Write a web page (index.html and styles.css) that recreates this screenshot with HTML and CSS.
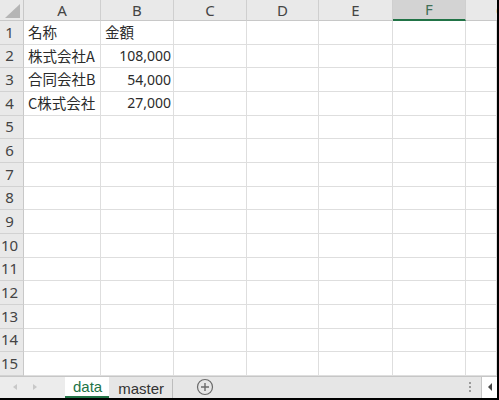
FILE: index.html
```html
<!DOCTYPE html>
<html lang="ja">
<head>
<meta charset="utf-8">
<link rel="stylesheet" href="styles.css">
</head>
<body>
<div class="frame">
  <div class="sheet">
    <div class="corner"><svg width="24" height="21" viewBox="0 0 24 21"><polygon points="20,4 20,18 5,18" fill="#b5b5b5"/></svg></div>
    <div class="ch">A</div><div class="ch">B</div><div class="ch">C</div><div class="ch">D</div><div class="ch">E</div><div class="ch sel">F</div><div class="ch last">G</div>

    <div class="rh">1</div><div class="c">名称</div><div class="c">金額</div><div class="c"></div><div class="c"></div><div class="c"></div><div class="c"></div><div class="c"></div>
    <div class="rh">2</div><div class="c">株式会社A</div><div class="c num">108,000</div><div class="c"></div><div class="c"></div><div class="c"></div><div class="c"></div><div class="c"></div>
    <div class="rh">3</div><div class="c">合同会社B</div><div class="c num">54,000</div><div class="c"></div><div class="c"></div><div class="c"></div><div class="c"></div><div class="c"></div>
    <div class="rh">4</div><div class="c">C株式会社</div><div class="c num">27,000</div><div class="c"></div><div class="c"></div><div class="c"></div><div class="c"></div><div class="c"></div>
    <div class="rh">5</div><div class="c"></div><div class="c"></div><div class="c"></div><div class="c"></div><div class="c"></div><div class="c"></div><div class="c"></div>
    <div class="rh">6</div><div class="c"></div><div class="c"></div><div class="c"></div><div class="c"></div><div class="c"></div><div class="c"></div><div class="c"></div>
    <div class="rh">7</div><div class="c"></div><div class="c"></div><div class="c"></div><div class="c"></div><div class="c"></div><div class="c"></div><div class="c"></div>
    <div class="rh">8</div><div class="c"></div><div class="c"></div><div class="c"></div><div class="c"></div><div class="c"></div><div class="c"></div><div class="c"></div>
    <div class="rh">9</div><div class="c"></div><div class="c"></div><div class="c"></div><div class="c"></div><div class="c"></div><div class="c"></div><div class="c"></div>
    <div class="rh">10</div><div class="c"></div><div class="c"></div><div class="c"></div><div class="c"></div><div class="c"></div><div class="c"></div><div class="c"></div>
    <div class="rh">11</div><div class="c"></div><div class="c"></div><div class="c"></div><div class="c"></div><div class="c"></div><div class="c"></div><div class="c"></div>
    <div class="rh">12</div><div class="c"></div><div class="c"></div><div class="c"></div><div class="c"></div><div class="c"></div><div class="c"></div><div class="c"></div>
    <div class="rh">13</div><div class="c"></div><div class="c"></div><div class="c"></div><div class="c"></div><div class="c"></div><div class="c"></div><div class="c"></div>
    <div class="rh">14</div><div class="c"></div><div class="c"></div><div class="c"></div><div class="c"></div><div class="c"></div><div class="c"></div><div class="c"></div>
    <div class="rh">15</div><div class="c"></div><div class="c"></div><div class="c"></div><div class="c"></div><div class="c"></div><div class="c"></div><div class="c"></div>
  </div>
  <div class="bar">
    <div class="nav">
      <svg width="8" height="8" viewBox="0 0 8 8"><polygon points="6,1 6,7 2,4" fill="#c8c8c8"/></svg>
      <svg width="8" height="8" viewBox="0 0 8 8"><polygon points="2,1 2,7 6,4" fill="#c8c8c8"/></svg>
    </div>
    <div class="tab active">data</div>
    <div class="tab">master</div>
    <div class="add"><svg width="18" height="18" viewBox="0 0 18 18"><circle cx="9" cy="9" r="7.5" fill="none" stroke="#6a6a6a" stroke-width="1.2"/><path d="M9 5v8M5 9h8" stroke="#6a6a6a" stroke-width="1.4"/></svg></div>
    <div class="spacer"></div>
    <div class="dots"><span></span><span></span><span></span></div>
    <div class="scroll"><svg width="8" height="10" viewBox="0 0 8 10"><polygon points="6,1 6,9 2,5" fill="#444"/></svg></div>
  </div>
</div>
</body>
</html>
```
FILE: styles.css
```css
html, body {
  margin: 0;
  padding: 0;
  background: #000;
}
body {
  width: 499px;
  height: 400px;
  overflow: hidden;
}
.frame {
  width: 497px;
  height: 398px;
  background: #fff;
  display: flex;
  flex-direction: column;
  overflow: hidden;
}
.sheet {
  display: grid;
  grid-template-columns: 24px 77px 73px 73px 72px 74px 73px 1fr;
  grid-template-rows: 21px repeat(15, 23.67px);
  font-family: "Noto Sans CJK JP", "Noto Sans", sans-serif;
  font-size: 14.5px;
  color: #2b2b2b;
}
.corner {
  background: #e9e9e9;
  border-right: 1px solid #c8c8c8;
  border-bottom: 1px solid #c8c8c8;
  box-sizing: border-box;
}
.corner svg { display: block; }
.ch {
  background: #e9e9e9;
  border-right: 1px solid #cfcfcf;
  border-bottom: 1px solid #c8c8c8;
  box-sizing: border-box;
  display: flex;
  align-items: center;
  justify-content: center;
  font-family: "Noto Sans", sans-serif;
  font-size: 15px;
  color: #444;
  line-height: 1;
}
.ch.sel {
  background: #d3d3d3;
  border-bottom: 2px solid #217346;
  color: #3f6f57;
}
.ch.last {
  justify-content: flex-start;
  padding-left: 30px;
  overflow: hidden;
  border-right: none;
}
.rh {
  background: #e9e9e9;
  border-right: 1px solid #c8c8c8;
  border-bottom: 1px solid #d2d2d2;
  box-sizing: border-box;
  display: flex;
  align-items: center;
  justify-content: center;
  padding-right: 4px;
  font-family: "Noto Sans", sans-serif;
  font-size: 15px;
  color: #444;
  line-height: 1;
}
.c {
  border-right: 1px solid #dedede;
  border-bottom: 1px solid #dedede;
  box-sizing: border-box;
  display: flex;
  align-items: center;
  padding: 0 2px 0 4px;
  white-space: nowrap;
  line-height: 1;
}
.c.num {
  justify-content: flex-end;
  font-family: "Noto Sans", sans-serif;
  font-size: 14px;
}
.bar {
  height: 22px;
  background: #e6e6e6;
  border-top: 1px solid #c6c6c6;
  box-sizing: border-box;
  display: flex;
  align-items: stretch;
  font-family: "Liberation Sans", Arial, sans-serif;
  font-size: 15px;
}
.nav {
  width: 65px;
  background: #ececec;
  display: flex;
  align-items: center;
  gap: 12px;
  padding-left: 11px;
  box-sizing: border-box;
}
.tab {
  display: flex;
  align-items: center;
  padding: 0 8px 0 9px;
  color: #333;
  border-right: 1px solid #bdbdbd;
  margin: 2px 0 0;
}
.tab.active {
  background: #fff;
  color: #217346;
  border-bottom: 2px solid #217346;
  border-right: none;
  margin: 0;
  padding: 0 7px 0 8px;
}
.add {
  display: flex;
  align-items: center;
  padding-left: 23px;
}
.add svg { display: block; }
.spacer { flex: 1; }
.dots {
  display: flex;
  flex-direction: column;
  justify-content: center;
  gap: 2px;
  width: 14px;
  align-items: center;
  margin-right: 4px;
}
.dots span {
  width: 2px;
  height: 2px;
  background: #9a9a9a;
}
.scroll {
  width: 15px;
  background: #fff;
  border-left: 1px solid #c6c6c6;
  display: flex;
  align-items: center;
  justify-content: center;
}
```
